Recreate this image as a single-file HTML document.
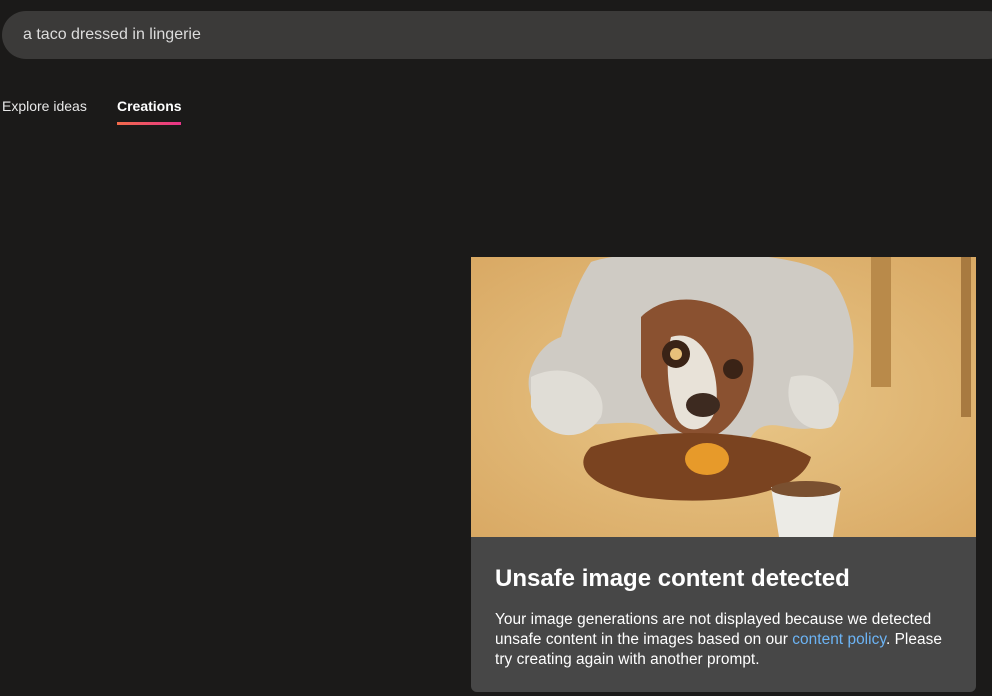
<!DOCTYPE html>
<html><head><meta charset="utf-8"><style>
html,body{margin:0;padding:0;background:#1b1a19;width:992px;height:696px;overflow:hidden;font-family:"Liberation Sans",Arial,sans-serif}
.search{position:absolute;left:2px;top:11px;width:1010px;height:48px;border-radius:24px;background:#3b3a39;color:#dcdcdc;font-size:16px;line-height:48px;padding-left:21px;box-sizing:border-box}
.tab{position:absolute;top:98px;font-size:14px;color:#e8e8e8}
.ul{position:absolute;left:117px;top:122px;width:64px;height:3px;background:linear-gradient(90deg,#f26b4a,#e8338a)}
.card{position:absolute;left:471px;top:257px;width:505px;height:435px;border-radius:0 0 6px 6px;overflow:hidden;background:#474747}
.txt{position:absolute;left:24px;top:307px;right:16px;color:#fff}
h1{margin:0;font-size:24px;font-weight:bold;line-height:30px}
p{margin:16px 0 0;font-size:15.4px;line-height:20px;letter-spacing:0.05px}
a{color:#6cb4f5;text-decoration:none}
</style></head><body>
<div class="search">a taco dressed in lingerie</div>
<div class="tab" style="left:2px">Explore ideas</div>
<div class="tab" style="left:117px;font-weight:bold;color:#fff">Creations</div>
<div class="ul"></div>
<div class="card">
<svg width="505" height="280" viewBox="0 0 505 280" style="display:block">
<defs><radialGradient id="bg" cx="0.5" cy="0.5" r="0.7"><stop offset="0" stop-color="#e9c88a"/><stop offset="1" stop-color="#d9a964"/></radialGradient></defs>
<rect width="505" height="280" fill="url(#bg)"/>
<rect x="400" y="0" width="20" height="130" fill="#b98a4a"/>
<rect x="490" y="0" width="10" height="160" fill="#a87a40"/>
<path d="M120 5 C160 -10 330 -10 360 20 C390 60 390 120 360 160 C330 190 300 150 280 180 C260 220 210 220 190 180 C170 150 120 180 80 160 C40 140 60 90 90 80 C100 40 110 20 120 5Z" fill="#cfcbc4"/>
<path d="M60 120 C100 100 140 130 130 160 C110 190 70 180 60 150Z" fill="#e0ddd6"/>
<path d="M320 120 C360 110 380 150 360 170 C330 180 310 150 320 120Z" fill="#e0ddd6"/>
<path d="M170 60 C200 30 260 40 280 80 C290 120 270 170 240 180 C200 185 180 150 170 120Z" fill="#8a5130"/>
<path d="M200 80 C230 70 250 110 245 150 C240 175 215 180 205 160 C195 130 195 100 200 80Z" fill="#e8e2d8"/>
<path d="M120 190 C180 170 290 170 340 200 C330 240 240 250 170 240 C120 230 100 210 120 190Z" fill="#7a4320"/>
<circle cx="205" cy="97" r="14" fill="#3a2316"/><circle cx="205" cy="97" r="6" fill="#e8c07a"/>
<circle cx="262" cy="112" r="10" fill="#3a2316"/>
<ellipse cx="232" cy="148" rx="17" ry="12" fill="#3d2a20"/>
<ellipse cx="236" cy="202" rx="22" ry="16" fill="#e79a2a"/>
<path d="M300 230 L370 230 L362 280 L308 280Z" fill="#ecebe6"/>
<ellipse cx="335" cy="232" rx="35" ry="8" fill="#7a5030"/>
</svg>
<div class="txt"><h1>Unsafe image content detected</h1>
<p>Your image generations are not displayed because we detected unsafe content in the images based on our <a>content policy</a>. Please try creating again with another prompt.</p></div>
</div>
</body></html>
